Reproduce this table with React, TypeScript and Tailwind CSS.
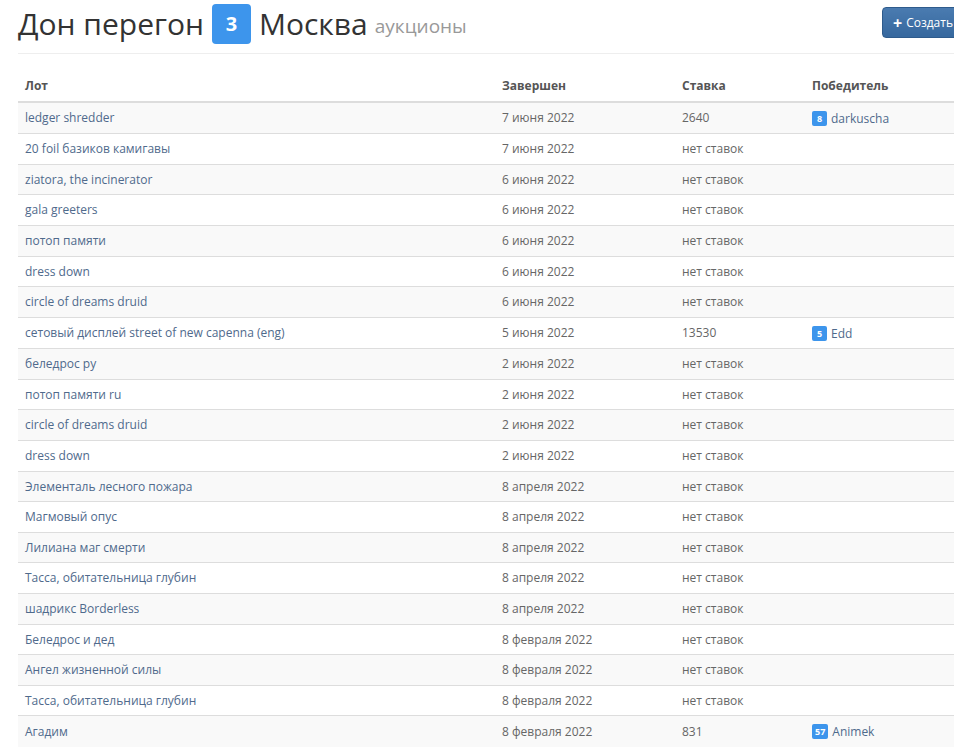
const rows: { lot: string; date: string; bid: string; winner?: { n: number; name: string } }[] = [
  { lot: "ledger shredder", date: "7 июня 2022", bid: "2640", winner: { n: 8, name: "darkuscha" } },
  { lot: "20 foil базиков камигавы", date: "7 июня 2022", bid: "нет ставок" },
  { lot: "ziatora, the incinerator", date: "6 июня 2022", bid: "нет ставок" },
  { lot: "gala greeters", date: "6 июня 2022", bid: "нет ставок" },
  { lot: "потоп памяти", date: "6 июня 2022", bid: "нет ставок" },
  { lot: "dress down", date: "6 июня 2022", bid: "нет ставок" },
  { lot: "circle of dreams druid", date: "6 июня 2022", bid: "нет ставок" },
  { lot: "сетовый дисплей street of new capenna (eng)", date: "5 июня 2022", bid: "13530", winner: { n: 5, name: "Edd" } },
  { lot: "беледрос ру", date: "2 июня 2022", bid: "нет ставок" },
  { lot: "потоп памяти ru", date: "2 июня 2022", bid: "нет ставок" },
  { lot: "circle of dreams druid", date: "2 июня 2022", bid: "нет ставок" },
  { lot: "dress down", date: "2 июня 2022", bid: "нет ставок" },
  { lot: "Элементаль лесного пожара", date: "8 апреля 2022", bid: "нет ставок" },
  { lot: "Магмовый опус", date: "8 апреля 2022", bid: "нет ставок" },
  { lot: "Лилиана маг смерти", date: "8 апреля 2022", bid: "нет ставок" },
  { lot: "Тасса, обитательница глубин", date: "8 апреля 2022", bid: "нет ставок" },
  { lot: "шадрикс Borderless", date: "8 апреля 2022", bid: "нет ставок" },
  { lot: "Беледрос и дед", date: "8 февраля 2022", bid: "нет ставок" },
  { lot: "Ангел жизненной силы", date: "8 февраля 2022", bid: "нет ставок" },
  { lot: "Тасса, обитательница глубин", date: "8 февраля 2022", bid: "нет ставок" },
  { lot: "Агадим", date: "8 февраля 2022", bid: "831", winner: { n: 57, name: "Animek" } },
];

function Header() {
  return (
    <div className="flex items-start justify-between h-[46px]">
      <h1 className="mt-[4px] flex items-center text-[30px] leading-none text-[#333]">
        <span>Дон перегон</span>
        <span className="ml-[8px] mr-[8px] flex h-[40px] w-[39px] items-center justify-center rounded-[4px] bg-[#3d95ec] text-[20px] font-bold text-white">
          3
        </span>
        <span>Москва</span>
        <span className="ml-[7px] mt-[5px] text-[19px] text-[#999]">аукционы</span>
      </h1>
      <button className="mt-[7px] flex h-[31px] items-center gap-[4px] rounded-[4px] border border-[#2e5b8c] bg-gradient-to-b from-[#4a7bb0] to-[#36689e] px-[10px] text-[12px] text-white">
        <span className="text-[16px] font-bold leading-none">+</span>
        Создать
      </button>
    </div>
  );
}

function Badge({ n }: { n: number }) {
  return (
    <span className="mr-[4px] inline-flex h-[15px] min-w-[15px] items-center justify-center rounded-[2px] bg-[#3d95ec] px-[3px] text-[9px] font-bold leading-none text-white">
      {n}
    </span>
  );
}

export default function App() {
  return (
    <div className="w-full overflow-hidden bg-white" style={{ fontFamily: '"Open Sans", sans-serif' }}>
      <div className="w-[964px] pl-[18px] pt-0">
        <Header />
        <div className="mt-[7px] border-t border-[#eee]" />
        <table className="mt-[16px] w-full border-collapse text-[12px] text-[#666]">
          <thead>
            <tr className="border-b-2 border-[#ddd]">
              <th className="w-[477px] px-[7px] pt-[6px] pb-[6px] text-left leading-[19px] font-bold text-[#555]">Лот</th>
              <th className="w-[180px] px-[7px] pt-[6px] pb-[6px] text-left leading-[19px] font-bold text-[#555]">Завершен</th>
              <th className="w-[130px] px-[7px] pt-[6px] pb-[6px] text-left leading-[19px] font-bold text-[#555]">Ставка</th>
              <th className="px-[7px] pt-[6px] pb-[6px] text-left leading-[19px] font-bold text-[#555]">Победитель</th>
            </tr>
          </thead>
          <tbody>
            {rows.map((r, i) => (
              <tr key={i} className={`border-t border-[#ddd] ${i % 2 === 0 ? "bg-[#f9f9f9]" : "bg-white"}`}>
                <td className="px-[7px] py-[5px] leading-[19.6px] text-[#4f6a8c]">{r.lot}</td>
                <td className="px-[7px] py-[5px] leading-[19.6px]">{r.date}</td>
                <td className="px-[7px] py-[5px] leading-[19.6px]">{r.bid}</td>
                <td className="px-[7px] py-[5px] leading-[19.6px]">
                  {r.winner && (
                    <span className="inline-flex items-center text-[#4f6a8c]">
                      <Badge n={r.winner.n} />
                      {r.winner.name}
                    </span>
                  )}
                </td>
              </tr>
            ))}
          </tbody>
        </table>
      </div>
    </div>
  );
}
